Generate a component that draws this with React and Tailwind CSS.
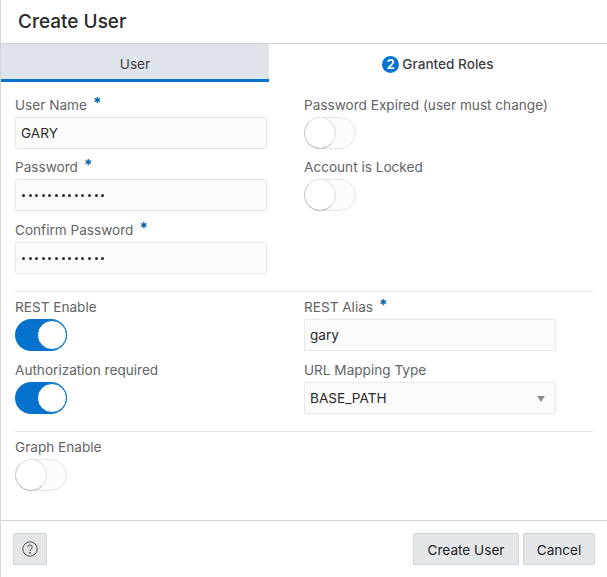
const inputCls =
  "flex h-[32px] w-[252px] items-center rounded-[2px] border border-[#e8e8e8] bg-[#fbfbfb] px-[5px] pt-[1px] text-[13.6px] text-[#2c2a28]";

const Field = ({ label, required, children, className = "" }) => (
  <div className={`flex flex-col ${className}`}>
    <div className="flex h-[24px] items-center text-[13.6px] text-[#646464]">
      {label}
      {required && (
        <span className="ml-[6px] -translate-y-[3px] text-[15px] font-bold leading-none text-[#04639e]">*</span>
      )}
    </div>
    {children}
  </div>
);

const Toggle = ({ on }) =>
  on ? (
    <div className="flex h-[32px] w-[52px] items-center justify-end rounded-full bg-[#0572ce]">
      <div className="h-[30px] w-[30px] rounded-full border border-[#0572ce] bg-white"></div>
    </div>
  ) : (
    <div className="relative h-[32px] w-[52px] rounded-full border border-[#e6e6e6] bg-[#fcfcfc]">
      <div className="absolute -left-px -top-px h-[32px] w-[32px] rounded-full border-[1.5px] border-t-[#e0e0e0] border-r-[#dedede] border-b-[#bcbcbc] border-l-[#c8c8c8] bg-white"></div>
    </div>
  );

const Dots = () => (
  <div className="ml-[1px] flex gap-[3.6px]">
    {Array.from({ length: 13 }).map((_, i) => (
      <span key={i} className="h-[3px] w-[3px] rounded-full bg-[#2c2a28]"></span>
    ))}
  </div>
);

export default function App() {
  return (
    <div
      className="flex h-[577px] w-[607px] flex-col border-l border-[#d6d6d6] bg-white"
      style={{ fontFamily: "Inter, 'Liberation Sans', sans-serif" }}
    >
      <div className="flex h-[44px] shrink-0 items-center border-b border-[#cfcfcf] pl-[17px] pt-[1px] text-[19px] font-medium text-[#2a2a2a]">
        Create User
      </div>

      <div className="flex h-[38px] shrink-0">
        <div className="flex w-[268px] items-center justify-center border-b-[3px] border-[#0572ce] bg-[#dfe4ea] pt-[5px] text-[13.6px] text-[#3f3f3f]">
          User
        </div>
        <div className="flex flex-1 items-center justify-center pt-[2px] text-[13.6px] font-medium text-[#3f3f3f]">
          <span className="mr-[3px] flex h-[17px] w-[17px] items-center justify-center rounded-full bg-[#0572ce] text-[13.5px] font-semibold text-white">
            2
          </span>
          Granted Roles
        </div>
      </div>

      <div className="flex flex-1 flex-col px-[14px] pt-[11px]">
        <div className="flex border-b border-[#e4e4e4] pb-[17px]">
          <div className="flex w-[289px] flex-col">
            <Field label="User Name" required>
              <div className={inputCls}>GARY</div>
            </Field>
            <Field label="Password" required className="mt-[6px]">
              <div className={inputCls}>
                <Dots />
              </div>
            </Field>
            <Field label="Confirm Password" required className="mt-[7px]">
              <div className={inputCls}>
                <Dots />
              </div>
            </Field>
          </div>
          <div className="flex flex-col gap-[6px]">
            <Field label="Password Expired (user must change)">
              <Toggle />
            </Field>
            <Field label="Account is Locked">
              <Toggle />
            </Field>
          </div>
        </div>

        <div className="flex border-b border-[#e4e4e4] pt-[3px] pb-[17px]">
          <div className="flex w-[289px] flex-col gap-[7px]">
            <Field label="REST Enable">
              <Toggle on />
            </Field>
            <Field label="Authorization required">
              <Toggle on />
            </Field>
          </div>
          <div className="flex flex-col gap-[7px]">
            <Field label="REST Alias" required>
              <div className={inputCls}>gary</div>
            </Field>
            <Field label="URL Mapping Type">
              <div className={`${inputCls} justify-between`}>
                BASE_PATH
                <span className="mr-[5px] h-0 w-0 border-x-[4.5px] border-t-[6px] border-x-transparent border-t-[#8c8c8c]"></span>
              </div>
            </Field>
          </div>
        </div>

        <div className="pt-[3px]">
          <Field label="Graph Enable">
            <Toggle />
          </Field>
        </div>
      </div>

      <div className="flex h-[57px] shrink-0 items-start justify-between border-t border-[#d0d0d0] pt-[12px] pl-[12px] pr-[12px]">
        <button className="flex h-[32px] w-[34px] items-center justify-center rounded-[2px] border border-[#cfd3d6] bg-[#e4e7ea]">
          <svg width="16" height="16" viewBox="0 0 16 16" fill="none" stroke="#4a4a4a" strokeWidth="1">
            <circle cx="8" cy="8" r="7.2" />
            <path d="M5.8 6.2a2.2 2.2 0 1 1 3.4 1.8c-.8.5-1.2 1-1.2 2" />
            <circle cx="8" cy="11.8" r="0.5" fill="#4a4a4a" />
          </svg>
        </button>
        <div className="flex gap-[4px]">
          <button className="h-[32px] w-[106px] rounded-[2px] border border-[#cfd3d6] bg-[#e4e7ea] pt-[2px] text-[13.6px] text-[#222]">
            Create User
          </button>
          <button className="h-[32px] w-[72px] rounded-[2px] border border-[#cfd3d6] bg-[#e4e7ea] pt-[2px] text-[13.6px] text-[#222]">
            Cancel
          </button>
        </div>
      </div>
    </div>
  );
}
